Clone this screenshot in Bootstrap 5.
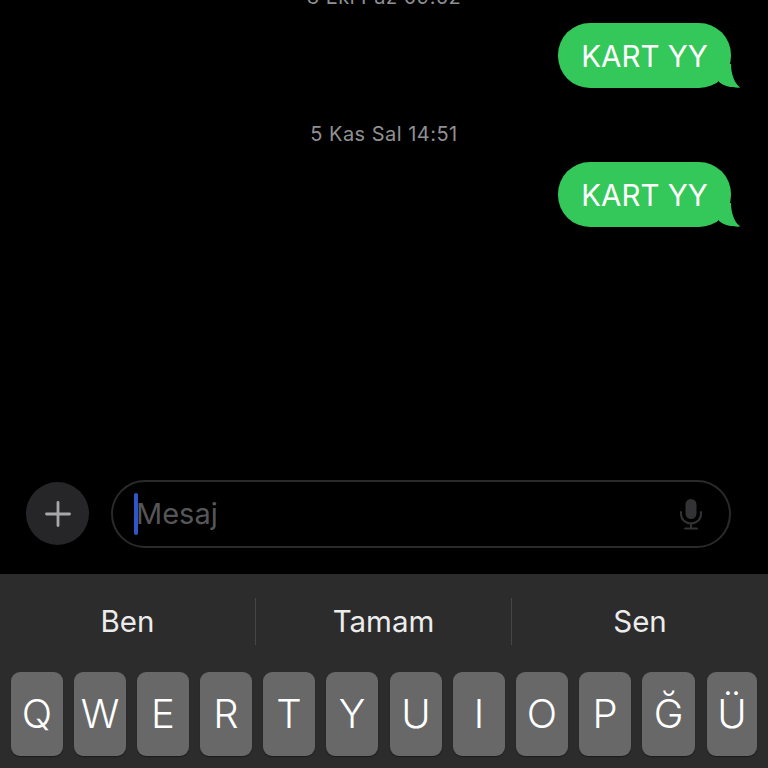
<!doctype html>
<html lang="tr">
<head>
  <meta charset="utf-8" />
  <meta name="viewport" content="width=device-width, initial-scale=1" />
  <title>Mesajlar</title>
  <link href="https://cdn.jsdelivr.net/npm/bootstrap@5.3.0/dist/css/bootstrap.min.css" rel="stylesheet" />
  <style>
    html, body {
      height: 768px;
      overflow: hidden;
      background: #000;
    }
    body {
      font-family: "Inter", "Liberation Sans", sans-serif;
    }
    .screen {
      height: 768px;
      overflow: hidden;
    }
    .thread {
      height: 480px;
    }
    .stamp {
      color: #909092;
      font-size: 20px;
      line-height: 24px;
      letter-spacing: 0.48px;
      text-align: center;
    }
    .stamp-cut {
      margin-top: -15px;
      height: 24px;
      margin-bottom: 14px;
    }
    .stamp-mid {
      margin: 34px 0 16px;
    }
    .bubble {
      position: relative;
      width: 173px;
      height: 65px;
      margin-right: 37px;
      padding-top: 2px;
      background: #34c759;
      color: #fff;
      border-radius: 32px;
      font-size: 29.500px;
      font-weight: 400;
    }
    .bubble-tail {
      position: absolute;
      right: -10px;
      bottom: 0;
    }
    .composer {
      height: 94px;
      padding: 0 37px 0 26px;
      gap: 22px;
    }
    .plus-btn {
      width: 63px;
      height: 63px;
      background: #262628;
      margin-top: 2px;
    }
    .msg-box {
      height: 68px;
      border: 2px solid #2a2a2c;
      border-radius: 34px;
      padding: 0 26px 0 21px;
    }
    .caret-bar {
      width: 4px;
      height: 42px;
      background: #2f55c9;
      border-radius: 2px;
    }
    .placeholder-txt {
      color: #565658;
      font-size: 29px;
      line-height: 40px;
      margin-left: -2px;
    }
    .kbd-panel {
      height: 194px;
      background: #2c2c2c;
    }
    .suggest-row {
      padding-top: 24px;
      height: 98px;
    }
    .suggest {
      color: #ececec;
      font-size: 29.500px;
      height: 47px;
      width: 255px;
    }
    .suggest + .suggest {
      width: 256px;
      border-left: 1px solid #464646;
    }
    .suggest:last-child {
      width: 257px;
    }
    .key-row {
      padding: 0 11px;
      gap: 11px;
    }
    .kkey {
      flex: 0 0 52px;
      height: 84px;
      background: #686868;
      color: #fff;
      border-radius: 9px;
      font-size: 40px;
      font-weight: 300;
      box-shadow: 0 1px 1px #1c1c1c;
    }
    .kkey.step { margin-left: 1px; }
    .kkey.wide { flex-basis: 53px; }
    .kkey.slim { flex-basis: 50px; }
  </style>
</head>
<body>
  <div class="screen d-flex flex-column">
    <div class="thread d-flex flex-column flex-shrink-0">
      <div class="stamp stamp-cut">3 Eki Paz 09:52</div>
      <div class="bubble align-self-end d-flex align-items-center justify-content-center">
        KART YY
        <svg class="bubble-tail" width="22" height="24" viewBox="0 0 22 24"><path d="M0 0H12C12 11 16 20 21.500 23.600C15 24 6 23 0 18Z" fill="#34c759"/></svg>
      </div>
      <div class="stamp stamp-mid">5 Kas Sal 14:51</div>
      <div class="bubble align-self-end d-flex align-items-center justify-content-center">
        KART YY
        <svg class="bubble-tail" width="22" height="24" viewBox="0 0 22 24"><path d="M0 0H12C12 11 16 20 21.500 23.600C15 24 6 23 0 18Z" fill="#34c759"/></svg>
      </div>
    </div>

    <div class="composer d-flex flex-shrink-0">
      <div class="plus-btn rounded-circle d-flex align-items-center justify-content-center flex-shrink-0">
        <svg width="26" height="26" viewBox="0 0 26 26"><path d="M13 1.500V24.500M1.500 13H24.500" stroke="#a8a8aa" stroke-width="2.800" stroke-linecap="round" fill="none"/></svg>
      </div>
      <div class="msg-box flex-grow-1 d-flex align-items-center">
        <span class="caret-bar flex-shrink-0"></span>
        <span class="placeholder-txt">Mesaj</span>
        <svg class="ms-auto" width="24" height="32" viewBox="0 0 24 32">
          <rect x="6.500" y="1" width="11" height="20" rx="5.500" fill="#333335"/>
          <path d="M2 14V16C2 21.500 6.500 25.500 12 25.500C17.500 25.500 22 21.500 22 16V14M12 25.500V30M6 30.500H18" stroke="#333335" stroke-width="2" stroke-linecap="round" fill="none"/>
        </svg>
      </div>
    </div>

    <div class="kbd-panel flex-shrink-0">
      <div class="suggest-row d-flex">
        <div class="suggest d-flex align-items-center justify-content-center">Ben</div>
        <div class="suggest d-flex align-items-center justify-content-center">Tamam</div>
        <div class="suggest d-flex align-items-center justify-content-center">Sen</div>
      </div>
      <div class="key-row d-flex">
        <div class="kkey d-flex align-items-center justify-content-center">Q</div>
        <div class="kkey d-flex align-items-center justify-content-center">W</div>
        <div class="kkey d-flex align-items-center justify-content-center">E</div>
        <div class="kkey d-flex align-items-center justify-content-center">R</div>
        <div class="kkey d-flex align-items-center justify-content-center">T</div>
        <div class="kkey d-flex align-items-center justify-content-center">Y</div>
        <div class="kkey step d-flex align-items-center justify-content-center">U</div>
        <div class="kkey d-flex align-items-center justify-content-center">I</div>
        <div class="kkey d-flex align-items-center justify-content-center">O</div>
        <div class="kkey d-flex align-items-center justify-content-center">P</div>
        <div class="kkey wide d-flex align-items-center justify-content-center">Ğ</div>
        <div class="kkey slim step d-flex align-items-center justify-content-center">Ü</div>
      </div>
    </div>
  </div>
  <script src="https://cdn.jsdelivr.net/npm/bootstrap@5.3.0/dist/js/bootstrap.bundle.min.js"></script>
</body>
</html>
